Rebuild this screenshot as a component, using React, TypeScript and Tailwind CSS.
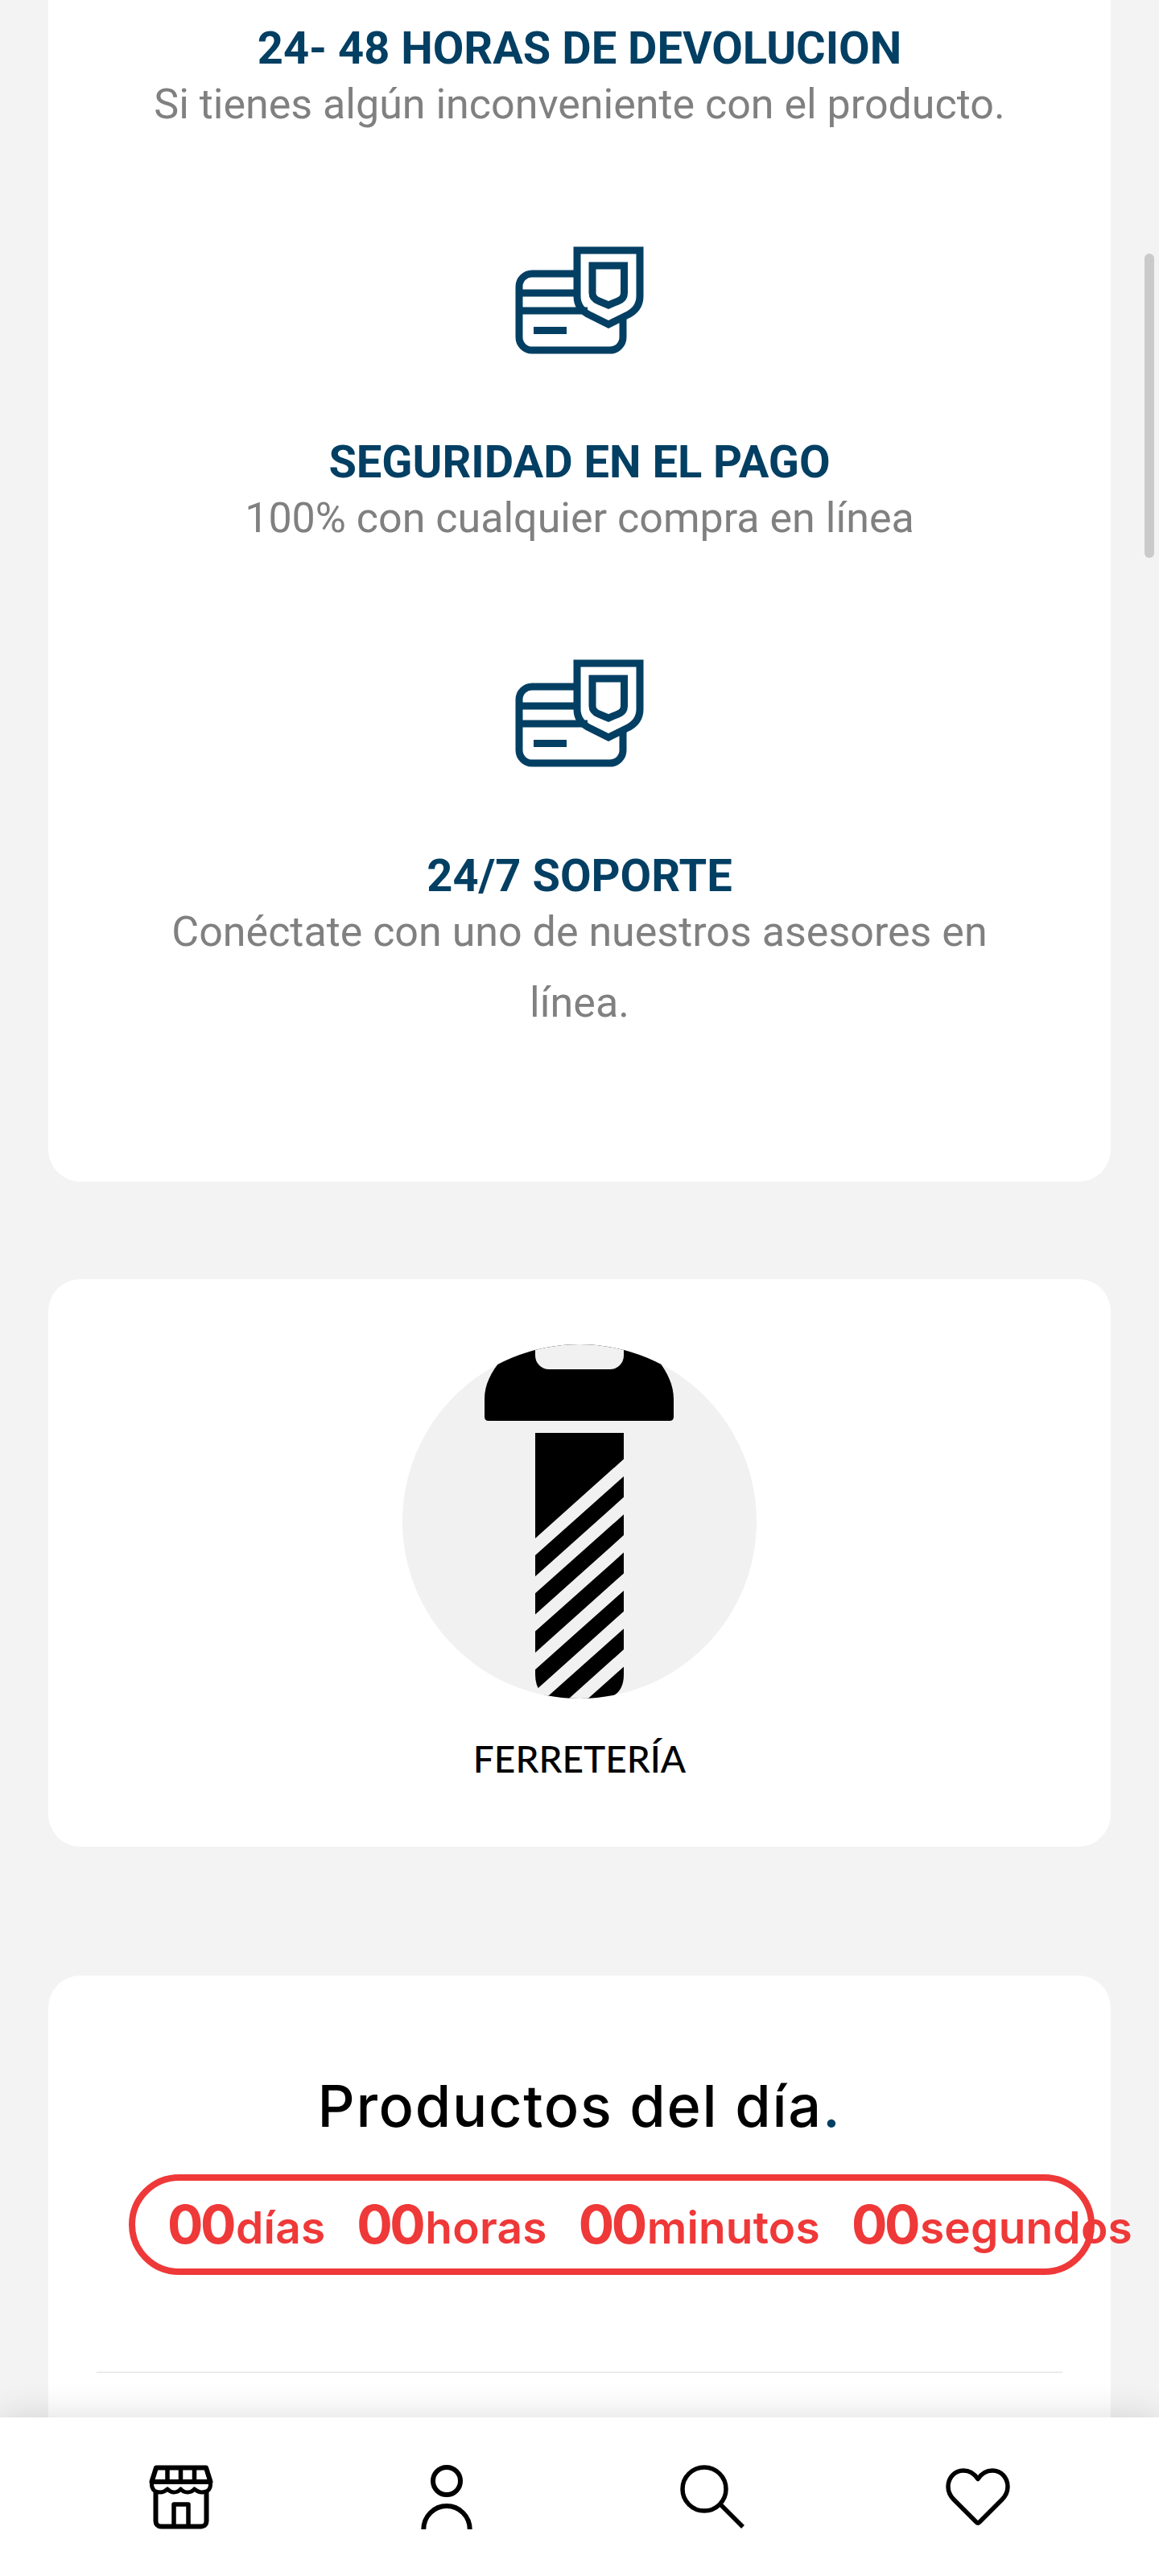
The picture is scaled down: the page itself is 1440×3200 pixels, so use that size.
import React from "react";

const navy = "#033f63";

function CardShieldIcon() {
    return (
        <svg width="160" height="134" viewBox="0 0 160 134" fill="none" stroke={navy} strokeWidth="9">
            <path d="M77 34H21A16 16 0 0 0 5 50V113A16 16 0 0 0 21 129H118A16 16 0 0 0 134 113V90" />
            <path d="M5 58H77M5 80H90" />
            <path d="M23 104.500H64" />
            <path d="M77 5H155V62C155 75 147 82 138 86L116 97L94 86C85 82 77 75 77 62Z" />
            <path d="M96 24H135.500V58C135.500 63 133 66 128 68L116 73L104 68C99 66 96 63 96 58Z" />
        </svg>
    );
}

function ScrewPicture() {
    const gaps = [0, 1, 2, 3, 4, 5];
    return (
        <svg width="440" height="440" viewBox="0 0 440 440">
            <defs>
                <clipPath id="round">
                    <circle cx="220" cy="220" r="220" />
                </clipPath>
            </defs>
            <circle cx="220" cy="220" r="220" fill="#f1f1f1" />
            <g clipPath="url(#round)">
                <path
                    d="M107 95Q102 95 102 90V68C102 50 110 35 122 20V0H318V20C329 35 337 50 337 68V90Q337 95 332 95Z"
                    fill="#000"
                />
                <rect x="165" y="-20" width="110" height="51" rx="17" fill="#f1f1f1" />
                <path d="M165 110H275V410Q275 437 250 440H190Q165 437 165 410Z" fill="#000" />
                {gaps.map((i) => (
                    <polygon
                        key={i}
                        fill="#f1f1f1"
                        points={`165,${241 + 47.3 * i} 275,${142.5 + 47.3 * i} 275,${164 + 47.3 * i} 165,${262 + 47.3 * i}`}
                    />
                ))}
            </g>
        </svg>
    );
}

function StoreIcon() {
    return (
        <svg width="80" height="80" viewBox="0 0 80 80" fill="none" stroke="#000" strokeWidth="6" strokeLinejoin="round">
            <path d="M9 3.500H71L76.500 21H3.500Z" />
            <path d="M23 3.500V21M39.500 3.500V21M56.500 3.500V21" strokeWidth="5.500" />
            <path
                d="M3.500 21V24C3.500 31 8 34 14 34C18 34 21 32 23 30C26 33 28 34 31 34C34 34 37 33 39.500 30C42 33 45 34 48 34C51 34 54 33 56.500 30C59 32 62 34 66 34C72 34 76.500 31 76.500 24V21"
                strokeWidth="5"
            />
            <path d="M8.500 34V70A6.500 6.500 0 0 0 15 76.500H65A6.500 6.500 0 0 0 71.500 70V34" />
            <path d="M31 76.500V49H49V76.500" strokeWidth="5.500" />
        </svg>
    );
}

function UserIcon() {
    return (
        <svg width="64" height="80" viewBox="0 0 64 80" fill="none" stroke="#000" strokeWidth="6">
            <circle cx="32" cy="20" r="17" />
            <path d="M3.300 80A28.700 29 0 0 1 60.700 80" />
        </svg>
    );
}

function SearchIcon() {
    return (
        <svg width="80" height="80" viewBox="0 0 80 80" fill="none" stroke="#000" strokeWidth="5.500">
            <circle cx="30" cy="30" r="27" />
            <path d="M51 50L78 77" />
        </svg>
    );
}

function HeartIcon() {
    return (
        <svg width="80" height="72" viewBox="0 0 80 72" fill="none" stroke="#000" strokeWidth="5.500" strokeLinejoin="round">
            <path d="M40 13.500C35 6 29 3 22 3C11 3 3 12 3 23C3 30 6 35 10 39L38 67Q40 69 42 67L70 39C74 35 77 30 77 23C77 12 69 3 58 3C51 3 45 6 40 13.500Z" />
        </svg>
    );
}

const Count = ({label}: {label: string}) => (
    <div className="flex shrink-0 items-baseline">
        <span className="text-[66px] font-bold tracking-[-3.500px]">00</span>
        <span className="ml-[3px] text-[55px] font-semibold tracking-[0.200px]">{label}</span>
    </div>
);

const App = () => {
    return (
        <div className="relative h-[3200px] overflow-hidden bg-[#f3f3f3] font-['Roboto',sans-serif]">
            <div className="mx-[60px] h-[1468px] rounded-b-[40px] bg-white pt-[26px] text-center">
                <h3 className="text-[56px] leading-[68px] font-bold text-[#033f63]">24- 48 HORAS DE DEVOLUCION</h3>
                <p className="text-[52px] leading-[72px] text-[#808080]">Si tienes algún inconveniente con el producto.</p>

                <div className="mt-[140px] flex justify-center">
                    <CardShieldIcon />
                </div>
                <h3 className="mt-[100px] text-[56px] leading-[68px] font-bold text-[#033f63]">SEGURIDAD EN EL PAGO</h3>
                <p className="text-[52px] leading-[72px] text-[#808080]">100% con cualquier compra en línea</p>

                <div className="mt-[139px] flex justify-center">
                    <CardShieldIcon />
                </div>
                <h3 className="mt-[101px] text-[56px] leading-[68px] font-bold text-[#033f63]">24/7 SOPORTE</h3>
                <p className="mx-auto -mt-[8px] w-[1100px] text-[52px] leading-[88px] text-[#808080]">
                    Conéctate con uno de nuestros asesores en línea.
                </p>
            </div>

            <div className="mx-[60px] mt-[121px] flex h-[705px] flex-col items-center rounded-[40px] bg-white pt-[81px]">
                <ScrewPicture />
                <p className="mt-[45px] font-['Lato',sans-serif] text-[46px] leading-[60px] font-medium text-black">
                    FERRETERÍA
                </p>
            </div>

            <div className="mx-[60px] mt-[160px] rounded-[40px] bg-white pt-[118px] pb-[300px]">
                <h2 className="text-center font-['Inter',sans-serif] text-[72px] leading-[88px] font-medium tracking-[1.700px] text-black">
                    Productos del día<span className="text-[#033f63]">.</span>
                </h2>
                <div className="mt-[41px] ml-[100px] flex h-[125px] w-[1200px] items-center gap-[39px] rounded-full border-[8px] border-[#ef3838] pl-[40px] font-['Inter',sans-serif] whitespace-nowrap text-[#ef3838]">
                    <Count label="días" />
                    <Count label="horas" />
                    <Count label="minutos" />
                    <Count label="segundos" />
                </div>
                <div className="mx-[60px] mt-[120px] h-[2px] bg-[#ececec]" />
            </div>

            {/* barra inferior */}
            <div className="absolute inset-x-0 bottom-0 grid h-[197px] grid-cols-4 items-center bg-white px-[60px] shadow-[0_0_44px_rgba(0,0,0,0.14)]">
                <div className="flex justify-center"><StoreIcon /></div>
                <div className="flex justify-center"><UserIcon /></div>
                <div className="flex justify-center"><SearchIcon /></div>
                <div className="flex justify-center"><HeartIcon /></div>
            </div>

            {/* scrollbar */}
            <div className="absolute top-[315px] right-[6px] h-[378px] w-[12px] rounded-full bg-[#cacaca]" />
        </div>
    );
};

export default App;
